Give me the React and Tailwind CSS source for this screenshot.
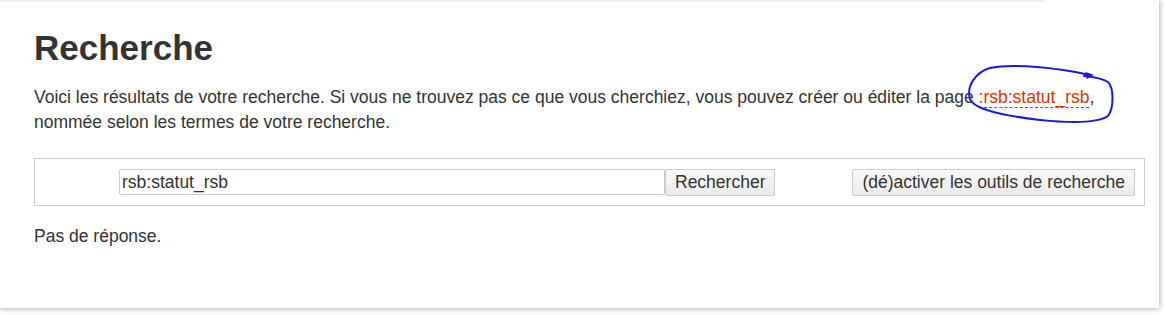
export default function App() {
  return (
    <div className="relative w-[1165px] h-[315px] bg-white overflow-hidden" style={{ fontFamily: '"Liberation Sans", Arial, sans-serif' }}>
      <div className="w-[1159px] h-[308px] bg-white shadow-[0_0_6px_#999] flex flex-col">
        <div className="w-[1045px] h-[2px] bg-[#eeeeee]" />
        <div className="pl-[34px] pr-[15px] text-[#333] text-[17.5px] leading-[24.5px]">
          <h1 className="mt-[25px] text-[35px] leading-[42px] font-bold text-[#333]">Recherche</h1>
          <p className="mt-[16px]">
            Voici les résultats de votre recherche. Si vous ne trouvez pas ce que vous cherchiez, vous pouvez créer ou éditer la page{' '}
            <a className="text-[#dd3300] border-b border-dashed border-[#dd3300]">:rsb:statut_rsb</a>, nommée selon les termes de votre recherche.
          </p>
          <div className="mt-[24px] w-[1111px] h-[48px] border border-[#cccccc] flex items-center justify-between pl-[84px] pr-[9px]">
            <div className="flex items-center">
              <div className="w-[546px] h-[26px] border border-[#cccccc] rounded-[2px] px-[2px] flex items-center text-[#333] text-[17.5px]">rsb:statut_rsb</div>
              <button className="h-[27px] px-[9px] border border-[#cccccc] rounded-[2px] bg-gradient-to-b from-[#fafafa] to-[#eaeaea] text-[#333] text-[17.5px] leading-[25px]">Rechercher</button>
            </div>
            <button className="h-[27px] px-[9px] border border-[#cccccc] rounded-[2px] bg-gradient-to-b from-[#fafafa] to-[#eaeaea] text-[#333] text-[17.5px] leading-[25px]">(dé)activer les outils de recherche</button>
          </div>
          <p className="mt-[18px]">Pas de réponse.</p>
        </div>
      </div>
      <svg className="absolute left-0 top-0 pointer-events-none" width="1165" height="315" viewBox="0 0 1165 315">
        <path
          d="M1090 75 C1060 68, 1012 63, 990 68 C976 72, 966 86, 970 99 C974 109, 998 115, 1040 120 C1070 123, 1098 123, 1108 116 C1114 108, 1114 88, 1108 82 C1102 78, 1094 77, 1084 76"
          fill="none"
          stroke="#1a1ad6"
          strokeWidth="2"
          strokeLinecap="round"
        />
        <path d="M1086 73 L1092 75 L1087 78" fill="none" stroke="#1a1ad6" strokeWidth="1.5" strokeLinecap="round" />
      </svg>
    </div>
  );
}
